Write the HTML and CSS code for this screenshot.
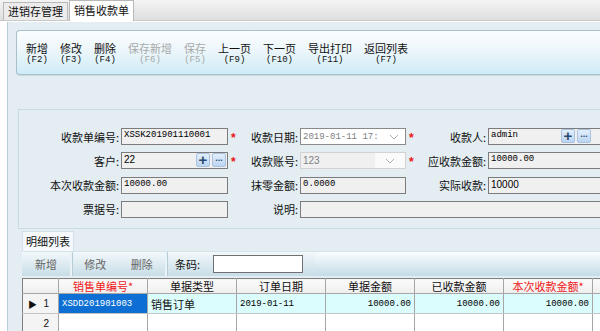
FILE: index.html
```html
<!DOCTYPE html>
<html lang="zh-CN">
<head>
  <meta charset="UTF-8" />
  <title>销售收款单</title>
  <link rel="stylesheet" href="styles.css">
</head>
<body>
  <div class="tabbar">
    <div class="tab">进销存管理</div>
    <div class="tab active">销售收款单</div>
  </div>

  <div class="main">
    <!-- top toolbar -->
    <div class="toolbar">
      <div class="tbtn"><em>新增</em><span>(F2)</span></div>
      <div class="tbtn"><em>修改</em><span>(F3)</span></div>
      <div class="tbtn"><em>删除</em><span>(F4)</span></div>
      <div class="tbtn off"><em>保存新增</em><span>(F6)</span></div>
      <div class="tbtn off"><em>保存</em><span>(F5)</span></div>
      <div class="tbtn"><em>上一页</em><span>(F9)</span></div>
      <div class="tbtn"><em>下一页</em><span>(F10)</span></div>
      <div class="tbtn"><em>导出打印</em><span>(F11)</span></div>
      <div class="tbtn"><em>返回列表</em><span>(F7)</span></div>
    </div>

    <!-- header form -->
    <div class="form">
      <label>收款单编号:</label>
      <div class="inp mono">XSSK201901110001</div>
      <span class="star">*</span>
      <label>收款日期:</label>
      <div class="combo date"><span>2019-01-11 17:</span><svg width="10" height="6" viewBox="0 0 10 6"><path d="M1 1l4 4 4-4" fill="none" stroke="#b0b0b0" stroke-width="1"/></svg></div>
      <span class="star">*</span>
      <label>收款人:</label>
      <div class="inp mono wide">admin<span class="pick"><b class="plus">+</b><b class="dots">...</b></span></div>

      <label>客户:</label>
      <div class="inp sans">22<span class="pick"><b class="plus">+</b><b class="dots">...</b></span></div>
      <span class="star">*</span>
      <label>收款账号:</label>
      <div class="combo acct"><span>123</span><i><svg width="10" height="6" viewBox="0 0 10 6"><path d="M1 1l4 4 4-4" fill="none" stroke="#b0b0b0" stroke-width="1"/></svg></i></div>
      <span class="star">*</span>
      <label>应收款金额:</label>
      <div class="inp mono wide">10000.00</div>

      <label>本次收款金额:</label>
      <div class="inp mono">10000.00</div>
      <span></span>
      <label>抹零金额:</label>
      <div class="inp mono">0.0000</div>
      <span></span>
      <label>实际收款:</label>
      <div class="inp sans wide">10000</div>

      <label>票据号:</label>
      <div class="inp"></div>
      <span></span>
      <label>说明:</label>
      <div class="inp span"></div>
    </div>

    <!-- detail list -->
    <div class="detail">
      <div class="dtab">明细列表</div>
      <div class="dbar">
        <div class="seg"><span class="dbtn">新增</span></div>
        <div class="seg"><span class="dbtn">修改</span><span class="dbtn">删除</span></div>
        <div class="seg code"><span class="lbl">条码:</span><div class="codebox"></div></div>
        <div class="seg rest"></div>
      </div>
      <table class="grid">
        <colgroup>
          <col style="width:36px"><col style="width:89px"><col style="width:89px"><col style="width:89px">
          <col style="width:89px"><col style="width:89px"><col style="width:89px"><col style="width:40px">
        </colgroup>
        <thead>
          <tr>
            <th></th>
            <th class="req">销售单编号*</th>
            <th>单据类型</th>
            <th>订单日期</th>
            <th>单据金额</th>
            <th>已收款金额</th>
            <th class="req">本次收款金额*</th>
            <th></th>
          </tr>
        </thead>
        <tbody>
          <tr class="cur">
            <td class="rh"><span class="arrow">&#9654;</span>1</td>
            <td class="sel mono">XSDD201901003</td>
            <td>销售订单</td>
            <td class="mono">2019-01-11</td>
            <td class="mono num">10000.00</td>
            <td class="mono num">10000.00</td>
            <td class="mono num">10000.00</td>
            <td></td>
          </tr>
          <tr>
            <td class="rh">2</td>
            <td></td><td></td><td></td><td></td><td></td><td></td><td></td>
          </tr>
        </tbody>
      </table>
    </div>
  </div>
</body>
</html>
```

FILE: styles.css
```css
body {
  margin: 0;
  width: 600px;
  height: 331px;
  overflow: hidden;
  background: #fff;
  font-family: "Noto Sans CJK SC", "Noto Sans", sans-serif;
  font-size: 11px;
  color: #111;
}

.mono {
  font-family: "Liberation Mono", "DejaVu Sans Mono", monospace;
  font-size: 9px;
  color: #000;
}

.sans {
  font-family: "Liberation Sans", Arial, sans-serif;
  font-size: 10px;
}

/* Tab strip */
.tabbar {
  display: flex;
  align-items: flex-end;
  height: 20px;
  padding-left: 3px;
  background: linear-gradient(#f4f4f4, #dedede);
  border-bottom: 1px solid #c8c8c8;
}

.tab {
  height: 17px;
  line-height: 16px;
  padding: 0 4px;
  border: 1px solid #b8b8b8;
  border-bottom: none;
  background: #ececec;
  margin-right: 1px;
}

.tab.active {
  height: 20px;
  line-height: 18px;
  background: #fff;
  margin-bottom: -1px;
}

/* Main panel */
.main {
  margin-left: 7px;
  margin-top: 1px;
  height: 309px;
  background: #e4edf2;
  border-left: 1px solid #b7cfdb;
  padding-top: 8px;
  box-sizing: border-box;
  overflow: hidden;
}

.toolbar {
  display: flex;
  align-items: center;
  gap: 12px;
  margin-left: 8px;
  height: 45px;
  padding-left: 9px;
  box-sizing: border-box;
  border: 1px solid #a9c0ca;
  border-right: none;
  border-radius: 4px 0 0 4px;
  background: linear-gradient(#fbfdfe 0%, #ecf6fa 45%, #cfecf8 100%);
  box-shadow: 0 1px 0 #c8dbe3;
}

.tbtn {
  display: flex;
  flex-direction: column;
  align-items: center;
  color: #111;
}

.tbtn em {
  font-style: normal;
  font-size: 11px;
  line-height: 14px;
  height: 14px;
}

.tbtn span {
  font-family: "Liberation Mono", monospace;
  font-size: 9px;
  line-height: 10px;
  height: 10px;
}

.tbtn.off {
  color: #a9a9a9;
}

/* Header form */
.form {
  display: grid;
  grid-template-columns: 102px 107px 19px 53px 106px 19px 63px 110px;
  grid-auto-rows: 17px;
  row-gap: 7.3px;
  align-items: center;
  margin: 34px 0 0 10px;
  height: 120px;
  padding-top: 18px;
  box-sizing: border-box;
  border: 1px solid #c7dbe5;
  border-right: none;
  overflow: hidden;
}

.form label {
  text-align: right;
  padding-right: 2px;
  font-size: 11px;
  color: #111;
  white-space: nowrap;
}

.inp {
  position: relative;
  height: 17px;
  box-sizing: border-box;
  border: 1px solid #7c7c7c;
  background: #f0f0f0;
  padding-left: 2px;
  line-height: 13px;
  color: #000;
  white-space: nowrap;
}

.inp.wide {
  width: 120px;
}

.inp.span {
  grid-column: 5 / 9;
  width: 320px;
}

.star {
  color: #e8141a;
  font-family: "Liberation Sans", sans-serif;
  font-weight: bold;
  font-size: 12px;
  padding-left: 3px;
  padding-top: 3px;
}

.pick {
  position: absolute;
  right: 1px;
  top: 0;
  display: flex;
  gap: 2px;
}

.inp.wide .pick {
  right: 16px;
}

.pick b {
  width: 14px;
  height: 14px;
  box-sizing: border-box;
  border: 1px solid #a8c2e0;
  border-radius: 2px;
  background: linear-gradient(#e3effc, #bcd5f2);
  color: #2b4a6e;
  text-align: center;
  font-family: "Liberation Sans", sans-serif;
}

.pick .plus {
  font-size: 15px;
  line-height: 12px;
  font-weight: bold;
}

.pick .dots {
  font-size: 9px;
  line-height: 9px;
  font-weight: bold;
}

.combo {
  display: flex;
  align-items: center;
  justify-content: space-between;
  height: 17px;
  box-sizing: border-box;
  padding: 0 6px 0 2px;
  color: #808080;
}

.combo.date {
  border: 1px solid #8a8a8a;
  background: #fff;
  font-family: "Liberation Mono", monospace;
  font-size: 9px;
}

.combo.acct {
  border: 1px solid #d2d2d2;
  background: #f0f0f0;
  font-family: "Liberation Sans", sans-serif;
  font-size: 10px;
  padding-right: 0;
}

.combo.acct i {
  display: flex;
  align-items: center;
  justify-content: center;
  width: 30px;
  height: 15px;
  background: #fafafa;
}

/* Detail list */
.detail {
  margin: 2px 0 0 14px;
}

.dtab {
  display: inline-block;
  height: 19px;
  line-height: 18px;
  padding: 0 3px;
  background: #f6f9fb;
  border: 1px solid #d2e0e7;
  border-bottom: none;
  font-size: 11px;
}

.dbar {
  display: flex;
  height: 24px;
  background: linear-gradient(#f2f8fb, #c8dde7);
  border-top: 1px solid #d4e3ea;
}

.seg {
  display: flex;
  align-items: center;
  border-right: 2px solid #e9f2f6;
  box-shadow: 1px 0 0 #b8ccd6;
}

.seg:first-child {
  width: 48px;
  justify-content: center;
}

.seg:nth-child(2) {
  width: 93px;
  justify-content: space-around;
}

.dbtn {
  color: #666;
  font-size: 11px;
}

.seg.code {
  padding-left: 8px;
  width: 134px;
  border-right: none;
  box-shadow: none;
}

.seg.code .lbl {
  width: 38px;
}

.codebox {
  width: 90px;
  height: 18px;
  box-sizing: border-box;
  border: 1px solid #707070;
  background: #fff;
}

.seg.rest {
  flex: 1;
  border: none;
  box-shadow: none;
  border-radius: 5px 0 0 0;
  background: linear-gradient(#fafdfe, #c3dce7);
  margin-left: 6px;
}

.grid {
  margin-top: 2px;
  table-layout: fixed;
  width: 610px;
  border-collapse: collapse;
  background: #fff;
  border-left: 1px solid #808080;
  border-top: 1px solid #808080;
}

.grid th {
  height: 14px;
  padding: 0;
  font-weight: normal;
  font-size: 11px;
  line-height: 13px;
  background: linear-gradient(#fbfbfb, #eeeeee);
  border-right: 1px solid #a6a6a6;
  border-bottom: 1px solid #a6a6a6;
  color: #111;
}

.grid th.req {
  color: #f01818;
}

.grid td {
  height: 20px;
  padding: 0 3px;
  border-right: 1px solid #a6a6a6;
  border-bottom: 1px solid #c4c4c4;
  white-space: nowrap;
  overflow: hidden;
  box-sizing: border-box;
}

.grid tr.cur td {
  background: #dcfdfd;
}

.grid td.rh {
  background: #f4f4f4 !important;
  text-align: right;
  padding-right: 9px;
  font-family: "Liberation Sans", sans-serif;
  font-size: 10px;
  position: relative;
}

.arrow {
  position: absolute;
  left: 5px;
  top: 4px;
  font-size: 9px;
}

.grid tr.cur td.sel {
  background: #0d6fd3;
  color: #fff;
}

.grid td.num {
  text-align: right;
}
```
